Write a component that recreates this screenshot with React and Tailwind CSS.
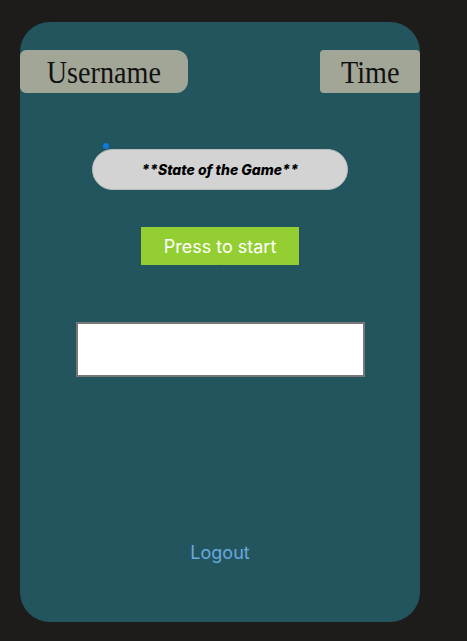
const App = () => {
  return (
    <div className="min-h-screen w-full bg-[#1e1c1b] pt-[22px] pl-[20px]">
      <div className="relative flex h-[600px] w-[400px] flex-col items-center rounded-[30px] bg-[#23555f] font-['Inter',sans-serif]">
        <div className="mt-[28px] flex w-full justify-between">
          <div className="flex h-[43px] w-[168px] items-center justify-center rounded-l-md rounded-r-xl bg-[#a1a697] font-['Liberation_Serif',serif] text-[32px] text-[#111]">
            <span className="inline-block scale-x-[0.88]">Username</span>
          </div>
          <div className="flex h-[43px] w-[100px] items-center justify-center rounded-sm bg-[#a1a697] font-['Liberation_Serif',serif] text-[32px] text-[#111]">
            <span className="inline-block scale-x-[0.88]">Time</span>
          </div>
        </div>

        <div className="relative mt-[56px]">
          <span className="absolute left-[11px] top-[-6px] h-[6px] w-[6px] rounded-full bg-[#0b7ad9]" />
          <div className="flex h-[41px] w-[256px] items-center justify-center rounded-full border border-[#b9bdbd] bg-[#d3d3d3] text-[14px] font-extrabold italic tracking-[0px] text-black">
            **State of the Game**
          </div>
        </div>

        <div className="relative mt-[37px]">
          <button className="flex h-[38px] w-[158px] items-center justify-center bg-[#93cf32] text-[18px] text-white">
            Press to start
          </button>
          <span className="absolute left-[79px] top-[38px] h-[1px] w-[1px] bg-[#333]" />
        </div>

        <input
          type="text"
          className="mt-[57px] h-[55px] w-[289px] border-2 border-[#777] bg-white outline-none"
        />

        <button className="mt-[162px] text-[18px] text-[#6aa8de]">Logout</button>
      </div>
    </div>
  );
};

export default App;
